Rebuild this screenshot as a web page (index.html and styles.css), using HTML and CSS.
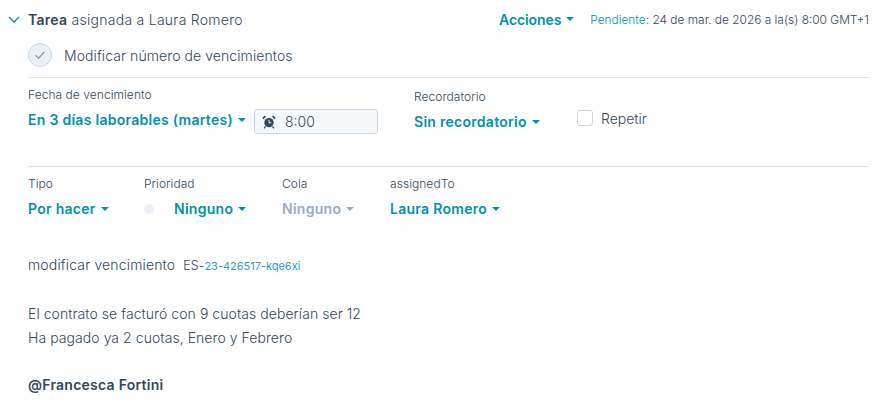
FILE: index.html
```html
<!DOCTYPE html>
<html lang="es">
<head>
<meta charset="utf-8">
<title>Tarea</title>
<link rel="stylesheet" href="styles.css">
</head>
<body>
<div class="page">
  <header class="head">
    <svg class="chev" width="12" height="7" viewBox="0 0 12 7"><path d="M1 1l5 5 5-5" fill="none" stroke="#0091ae" stroke-width="1.3"/></svg>
    <div class="title"><b>Tarea</b> asignada a Laura Romero</div>
    <a class="link actions">Acciones<i class="caret"></i></a>
    <div class="status"><span class="pend">Pendiente:</span> 24 de mar. de 2026 a la(s) 8:00 GMT+1</div>
  </header>
  <div class="body">
    <div class="task">
      <span class="check"><svg width="12" height="10" viewBox="0 0 12 10"><path d="M1.5 5.2l3 3 6-6.4" fill="none" stroke="#8a9cb3" stroke-width="1.3"/></svg></span>
      <span class="task-name">Modificar número de vencimientos</span>
    </div>
    <div class="row row-due">
      <div class="field f-date">
        <label>Fecha de vencimiento</label>
        <div class="date-line">
          <a class="link">En 3 días laborables (martes)<i class="caret"></i></a>
          <div class="time">
            <svg width="14" height="14" viewBox="0 0 14 14"><circle cx="7" cy="7.6" r="4.7" fill="#33475b"/><path d="M7 5v2.8h2.2" fill="none" stroke="#f5f8fa" stroke-width="1"/><path d="M.8 3.6L3.4 1.2M13.2 3.6L10.6 1.2" stroke="#33475b" stroke-width="1.8"/><path d="M3.5 11.5l-1.5 1.8M10.5 11.5l1.5 1.8" stroke="#33475b" stroke-width="1.2"/></svg>
            <span>8:00</span>
          </div>
        </div>
      </div>
      <div class="field f-rem">
        <label>Recordatorio</label>
        <a class="link">Sin recordatorio<i class="caret"></i></a>
      </div>
      <div class="repeat"><span class="box"></span><span>Repetir</span></div>
    </div>
    <div class="row row-props">
      <div class="field f-tipo"><label>Tipo</label><a class="link">Por hacer<i class="caret"></i></a></div>
      <div class="field f-prio"><label>Prioridad</label><div class="prio"><span class="dot"></span><a class="link">Ninguno<i class="caret"></i></a></div></div>
      <div class="field f-cola"><label>Cola</label><a class="link off">Ninguno<i class="caret"></i></a></div>
      <div class="field"><label>assignedTo</label><a class="link">Laura Romero<i class="caret"></i></a></div>
    </div>
    <div class="note">
      <p class="first"><span class="subject">modificar vencimiento</span> &nbsp;<span class="code">ES-<a>23-426517-kqe6xi</a></span></p>
      <p>El contrato se facturó con 9 cuotas deberían ser 12</p>
      <p>Ha pagado ya 2 cuotas, Enero y Febrero</p>
      <p class="mention">@Francesca Fortini</p>
    </div>
  </div>
</div>
</body>
</html>
```
FILE: styles.css
```css
* { box-sizing: border-box; }
html, body { margin: 0; padding: 0; }
body {
  width: 882px; height: 402px; overflow: hidden; background: #fff;
  font-family: Inter, "Noto Sans", sans-serif; color: #33475b; font-size: 14px; font-weight: 300;
}
.page { padding: 8px 13px 0 8px; }
.head { display: flex; align-items: center; height: 22px; }
.chev { margin-right: 8px; }
.title { flex: 1; font-size: 14px; letter-spacing: .27px; }
.title b { font-weight: 600; }
.link { color: #0091ae; font-weight: 600; font-size: 14px; letter-spacing: .28px; white-space: nowrap; display: inline-flex; align-items: center; }
.link.off { color: #99acc2; }
.caret { display: inline-block; margin-left: 5px; border: 4px solid transparent; border-top: 4.5px solid currentColor; border-bottom: 0; }
.actions { margin-right: 16px; letter-spacing: -.1px; }
.status { font-size: 11.9px; }
.pend { color: #0091ae; }
.body { padding-left: 20px; }
.task { display: flex; align-items: center; gap: 12px; height: 24px; margin-top: 13px; }
.check { width: 24px; height: 24px; border-radius: 50%; background: #eaf0f6; border: 1px solid #cbd6e2; display: flex; align-items: center; justify-content: center; }
.task-name { font-size: 14px; letter-spacing: .08px; }
.row { display: flex; }
.row-due { border-top: 1px solid #dfe3eb; margin-top: 10px; height: 90px; padding-top: 9px; border-bottom: 1px solid #dfe3eb; }
label { display: block; font-size: 12px; line-height: 16px; margin-bottom: 8px; letter-spacing: .05px; }
.f-date { width: 386px; }
.date-line { display: flex; align-items: center; gap: 8px; margin-top: -2px; }
.date-line .link { margin-bottom: 4px; }
.time { width: 124px; height: 25px; background: #f5f8fa; border: 1px solid #cbd6e2; border-radius: 3px; display: flex; align-items: center; gap: 9px; padding-left: 7px; font-size: 14px; }
.f-rem { width: 163px; padding-top: 2px; }
.repeat { display: flex; align-items: center; gap: 8px; height: 18px; margin-top: 22px; font-size: 14px; }
.box { width: 16px; height: 16px; border: 1px solid #cbd6e2; border-radius: 3px; }
.row-props { padding-top: 9px; }
.f-tipo { width: 116px; }
.f-prio { width: 138px; }
.f-cola { width: 108px; }
.prio { display: flex; align-items: center; gap: 20px; }
.dot { width: 10px; height: 10px; border-radius: 50%; background: #eaf0f6; }
.note { margin-top: 36px; font-size: 14px; letter-spacing: .06px; }
.note p { margin: 0; line-height: 24px; }
.note .first { margin-bottom: 24px; }
.subject { letter-spacing: .15px; }
.code { font-size: 12.5px; font-weight: 300; }
.code a { color: #2e9bd9; font-size: 11px; font-weight: 400; letter-spacing: -.01px; }
.note .mention { margin-top: 23px; font-weight: 600; letter-spacing: .25px; }
```
